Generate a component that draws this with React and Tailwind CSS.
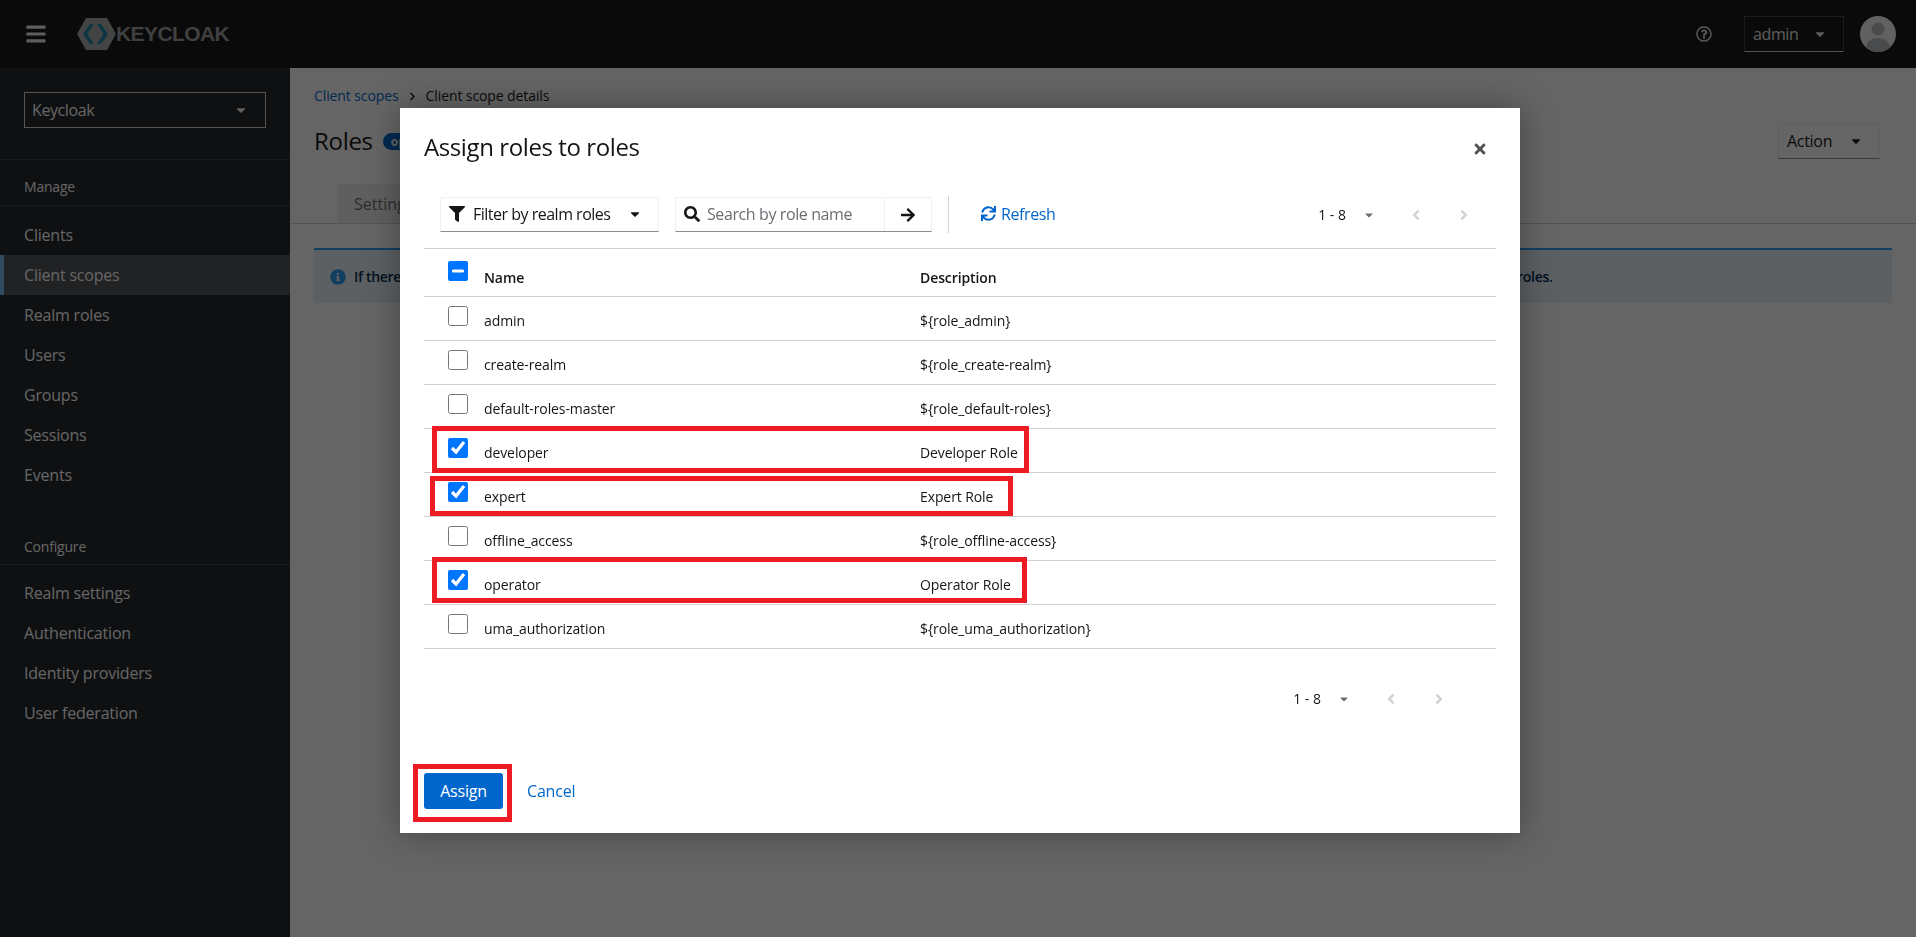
import React from 'react';
import {
  FaArrowRight, FaAngleLeft, FaAngleRight, FaBars, FaCaretDown, FaChevronRight, FaFilter,
  FaInfoCircle, FaRegQuestionCircle, FaSearch, FaSync, FaTimes,
} from 'react-icons/fa';

const SANS = 'font-["Open_Sans","Liberation_Sans",sans-serif]';

const MANAGE = ['Clients', 'Client scopes', 'Realm roles', 'Users', 'Groups', 'Sessions', 'Events'];
const CONFIGURE = ['Realm settings', 'Authentication', 'Identity providers', 'User federation'];

// boxes are the red annotation frames drawn on top of the screenshot
const ROLES = [
  { name: 'admin', desc: '${role_admin}' },
  { name: 'create-realm', desc: '${role_create-realm}' },
  { name: 'default-roles-master', desc: '${role_default-roles}' },
  { name: 'developer', desc: 'Developer Role', checked: true, box: 'left-[8px] top-[-3px] w-[597px] h-[47px]' },
  { name: 'expert', desc: 'Expert Role', checked: true, box: 'left-[6px] top-[3px] w-[583px] h-[40px]' },
  { name: 'offline_access', desc: '${role_offline-access}' },
  { name: 'operator', desc: 'Operator Role', checked: true, box: 'left-[8px] top-[-4px] w-[595px] h-[46px]' },
  { name: 'uma_authorization', desc: '${role_uma_authorization}' },
];

function NavItem({ label, active }) {
  return (
    <div className={`h-10 flex items-center text-[16px] tracking-[-0.2px] ${active ? 'bg-[#4f5255] border-l-4 border-[#73bcf7] pl-5' : 'pl-6'}`}>
      {label}
    </div>
  );
}

function Sidebar() {
  return (
    <aside className="w-[290px] shrink-0 bg-[#212427] text-white">
      <div className="h-[92px] border-b border-[#3c3f42] px-6 pt-6">
        <div className="h-9 w-[242px] border border-[#d2d2d2] flex items-center justify-between pl-[7px] pr-[17px] text-[16px] tracking-[-0.4px]">
          Keycloak
          <FaCaretDown className="text-[#f0f0f0] text-[14px]" />
        </div>
      </div>
      <div className="h-[46px] border-b border-[#3c3f42] flex items-center pt-2 pl-6 text-[14px] tracking-[-0.2px]">Manage</div>
      <div className="pt-[9px]">
        {MANAGE.map((m) => <NavItem key={m} label={m} active={m === 'Client scopes'} />)}
      </div>
      <div className="h-[61px] border-b border-[#3c3f42] mt-[9px] flex items-end pb-[7px] pl-6 text-[14px] tracking-[-0.2px]">Configure</div>
      <div className="pt-[8px]">
        {CONFIGURE.map((m) => <NavItem key={m} label={m} />)}
      </div>
    </aside>
  );
}

function Header() {
  return (
    <header className="h-[68px] shrink-0 bg-[#151515] flex items-center text-white">
      <FaBars className="ml-[25px] text-[22px] text-[#ededed]" />
      <div className="ml-[30px] flex items-center">
        <svg width="40" height="32" viewBox="0 0 40 32">
          <path d="M0 16 L9 0 H30 L39 16 L30 32 H9 Z" fill="#aaaaaa" />
          <path d="M13 6 L6 16 L13 26 H17 L10.5 16 L17 6 Z" fill="#1a8aa6" />
          <path d="M24 6 L31 16 L24 26 H20 L26.5 16 L20 6 Z" fill="#1a8aa6" />
        </svg>
        <span className='-ml-[1px] font-["Liberation_Sans",sans-serif] font-bold text-[21px] tracking-[-0.6px] text-[#a0a0a0]'>KEYCLOAK</span>
      </div>
      <div className="ml-auto flex items-center pr-5">
        <FaRegQuestionCircle className="text-[16px] text-[#e0e0e0] mr-8" />
        <div className="w-[100px] h-9 border border-[#444] border-b-[#d2d2d2] flex items-center pl-2 text-[16px] tracking-[-0.4px] text-[#e8e8e8]">
          admin
          <FaCaretDown className="ml-[15px] text-[14px]" />
        </div>
        <svg className="ml-4" width="36" height="36" viewBox="0 0 36 36">
          <clipPath id="av"><circle cx="18" cy="18" r="18" /></clipPath>
          <g clipPath="url(#av)">
            <rect width="36" height="36" fill="#f5f5f5" />
            <circle cx="18" cy="13" r="6.5" fill="#b8bbbe" />
            <ellipse cx="18" cy="32" rx="12" ry="10" fill="#b8bbbe" />
          </g>
        </svg>
      </div>
    </header>
  );
}

function Main() {
  return (
    <main className="flex-1 bg-white text-[#151515]">
      <div className="h-[115px] bg-white px-6">
        <div className="pt-[18px] flex items-center text-[14px] leading-5 tracking-[-0.1px]">
          <span className="text-[#06c]">Client scopes</span>
          <FaChevronRight className="mx-[9px] text-[9px]" />
          <span>Client scope details</span>
        </div>
        <div className="mt-[17px] flex items-center justify-between">
          <div className="flex items-center">
            <span className="text-[24px] leading-8 tracking-[-0.3px]">Roles</span>
            <span className="ml-[10px] h-[17px] px-2 rounded-full bg-[#06c] text-white text-[12px] font-bold leading-[17px]">openid</span>
          </div>
          <div className="w-[102px] h-9 border border-[#f0f0f0] border-b-[#8a8d90] flex items-center pl-2 mr-3 text-[16px] tracking-[-0.3px]">
            Action
            <FaCaretDown className="ml-[17px] text-[14px]" />
          </div>
        </div>
      </div>
      <div className="h-[41px] border-b border-[#d2d2d2] pl-12 flex items-end">
        <div className="w-[120px] h-[39px] bg-[#f0f0f0] pl-4 flex items-center text-[16px] text-[#6a6e73]">Settings</div>
      </div>
      <div className="mx-6 mt-6 h-[55px] border-t-2 border-[#2b9af3] bg-[#e7f1fa] flex items-center pl-4 text-[14px] font-semibold tracking-[-0.32px] text-[#002952]">
        <FaInfoCircle className="text-[16px] text-[#2b9af3] mr-2" />
        If there is no role scope mappings defined, each user is permitted to use this client scope. If there are role scope mappings defined, the user must be a member of at least one of the roles.
      </div>
    </main>
  );
}

function Pager({ className }) {
  return (
    <div className={`flex items-center text-[14px] text-[#151515] ${className}`}>
      <span>1 - 8</span>
      <FaCaretDown className="ml-[17px] text-[12px] text-[#6a6e73]" />
      <FaAngleLeft className="ml-[33px] text-[16px] text-[#d2d2d2]" />
      <FaAngleRight className="ml-[32px] text-[16px] text-[#d2d2d2]" />
    </div>
  );
}

function RoleRow({ role }) {
  return (
    <div className="relative h-11 border-b border-[#d2d2d2] flex text-[14px] tracking-[-0.1px] text-[#151515]">
      <input type="checkbox" checked={!!role.checked} readOnly className="ml-6 mt-[9px] w-5 h-5" />
      <span className="ml-4 mt-[14px] w-[436px] leading-5">{role.name}</span>
      <span className="mt-[14px] leading-5">{role.desc}</span>
      {role.box && <div className={`absolute border-[5px] border-[#ed1c24] ${role.box}`} />}
    </div>
  );
}

function AssignModal() {
  return (
    <div className="fixed inset-0 bg-[rgba(3,3,3,0.61)] flex items-center justify-center pl-1 pt-1">
      <div className="w-[1120px] h-[725px] bg-white shadow-[0_0_32px_rgba(3,3,3,0.35)] flex flex-col text-[#151515]">
        <div className="h-[89px] shrink-0 pl-6 pr-8 flex items-start justify-between pt-6">
          <h1 className="text-[24px] leading-[30px] tracking-[-0.4px]">Assign roles to roles</h1>
          <FaTimes className="mt-[9px] text-[16px] text-[#4f5255]" />
        </div>
        <div className="h-[35px] shrink-0 ml-10 flex items-center text-[14px]">
          <div className="w-[219px] h-full border border-[#f0f0f0] border-b-[#8a8d90] flex items-center pl-2 pb-[2px] text-[16px] tracking-[-0.5px]">
            <FaFilter className="text-[16px] mr-2" />
            Filter by realm roles
            <FaCaretDown className="ml-auto mr-4 text-[14px]" />
          </div>
          <div className="ml-4 w-[257px] h-full border border-[#f0f0f0] border-b-[#8a8d90] flex items-center">
            <div className="w-[209px] h-full flex items-center pl-2 pb-[2px] border-r border-[#f0f0f0] text-[16px] tracking-[-0.4px] text-[#6a6e73]">
              <FaSearch className="text-[16px] text-[#151515] mr-[7px]" />
              Search by role name
            </div>
            <FaArrowRight className="ml-[15px] text-[16px]" />
          </div>
          <div className="ml-4 w-px h-[37px] bg-[#d2d2d2]" />
          <div className="ml-8 pb-[2px] flex items-center text-[16px] tracking-[-0.4px] text-[#06c]">
            <FaSync className="text-[15px] mr-[5px]" />
            Refresh
          </div>
          <Pager className="ml-auto mr-[48px]" />
        </div>
        <div className="mx-6 mt-4 border-t border-[#d2d2d2]">
          <div className="h-[48px] border-b border-[#d2d2d2] flex text-[14px] tracking-[-0.1px] font-semibold">
            <input
              type="checkbox"
              readOnly
              ref={(el) => { if (el) el.indeterminate = true; }}
              className="ml-6 mt-[12px] w-5 h-5"
            />
            <span className="ml-4 mt-[19px] w-[436px] leading-5">Name</span>
            <span className="mt-[19px] leading-5">Description</span>
          </div>
          {ROLES.map((r) => <RoleRow key={r.name} role={r} />)}
        </div>
        <Pager className="mt-[39px] ml-auto mr-[73px]" />
        <div className="mt-auto px-6 pb-6 flex items-center text-[16px] tracking-[-0.2px]">
          <div className="relative">
            <button className="w-[79px] h-9 rounded-[3px] bg-[#06c] text-white">Assign</button>
            <div className="absolute left-[-11px] top-[-9px] w-[99px] h-[58px] border-[5px] border-[#ed1c24]" />
          </div>
          <span className="ml-6 text-[#06c]">Cancel</span>
        </div>
      </div>
    </div>
  );
}

export default function App() {
  return (
    <div className={`h-screen flex flex-col overflow-hidden ${SANS}`}>
      <Header />
      <div className="flex flex-1">
        <Sidebar />
        <Main />
      </div>
      <AssignModal />
    </div>
  );
}
